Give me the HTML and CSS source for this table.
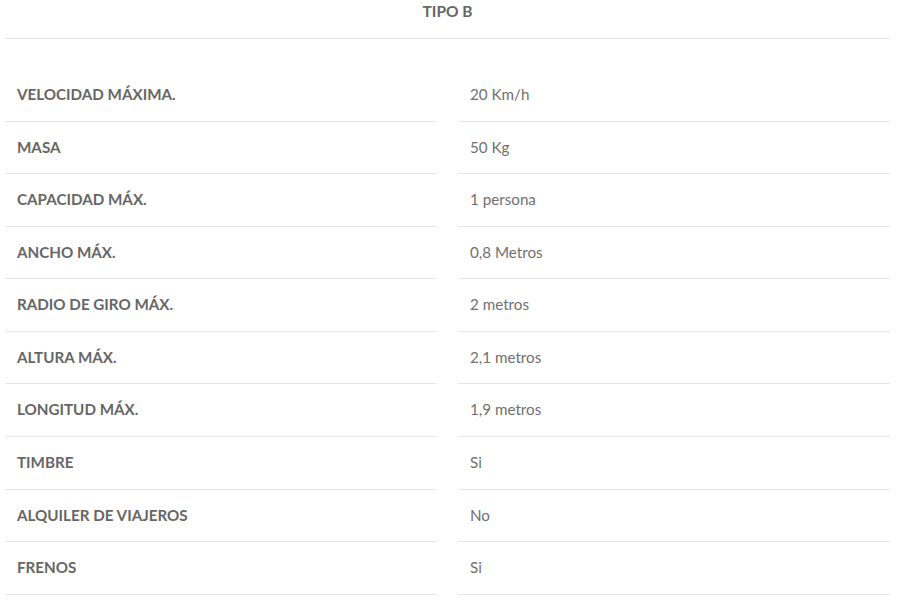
FILE: index.html
```html
<!DOCTYPE html>
<html lang="es">
<head>
	<meta charset="UTF-8">
	<title>Tipo B</title>
	<link rel="stylesheet" href="styles.css">
</head>
<body>
	<div class="ficha">
		<h3 class="ficha-title">TIPO B</h3>
		<div class="specs">
			<div class="row"><div class="label">VELOCIDAD MÁXIMA.</div><div class="value">20 Km/h</div></div>
			<div class="row"><div class="label">MASA</div><div class="value">50 Kg</div></div>
			<div class="row"><div class="label">CAPACIDAD MÁX.</div><div class="value">1 persona</div></div>
			<div class="row"><div class="label">ANCHO MÁX.</div><div class="value">0,8 Metros</div></div>
			<div class="row"><div class="label">RADIO DE GIRO MÁX.</div><div class="value">2 metros</div></div>
			<div class="row"><div class="label">ALTURA MÁX.</div><div class="value">2,1 metros</div></div>
			<div class="row"><div class="label">LONGITUD MÁX.</div><div class="value">1,9 metros</div></div>
			<div class="row"><div class="label">TIMBRE</div><div class="value">Si</div></div>
			<div class="row"><div class="label">ALQUILER DE VIAJEROS</div><div class="value">No</div></div>
			<div class="row"><div class="label">FRENOS</div><div class="value">Si</div></div>
		</div>
	</div>
</body>
</html>
```

FILE: styles.css
```css
*{ margin:0; padding:0; box-sizing:border-box; }
body{ background:#fff; font-family:Lato, "Liberation Sans", sans-serif; color:#666; }

.ficha{ width:885px; margin:0 0 0 5px; }
.ficha-title{ font-size:15.5px; font-weight:bold; line-height:22px; text-align:center; color:#666; padding-bottom:16px; border-bottom:1px solid #e6e6e6; }

.specs{ margin-top:30px; }
.specs .row{ display:grid; grid-template-columns:432px 432px; column-gap:21px; }
.specs .label,.specs .value{ font-size:15.2px; line-height:21.56px; padding:15px 12px; border-bottom:1px solid #e6e6e6; }
.specs .label{ font-weight:bold; color:#666; }
.specs .value{ color:#707070; }
```
